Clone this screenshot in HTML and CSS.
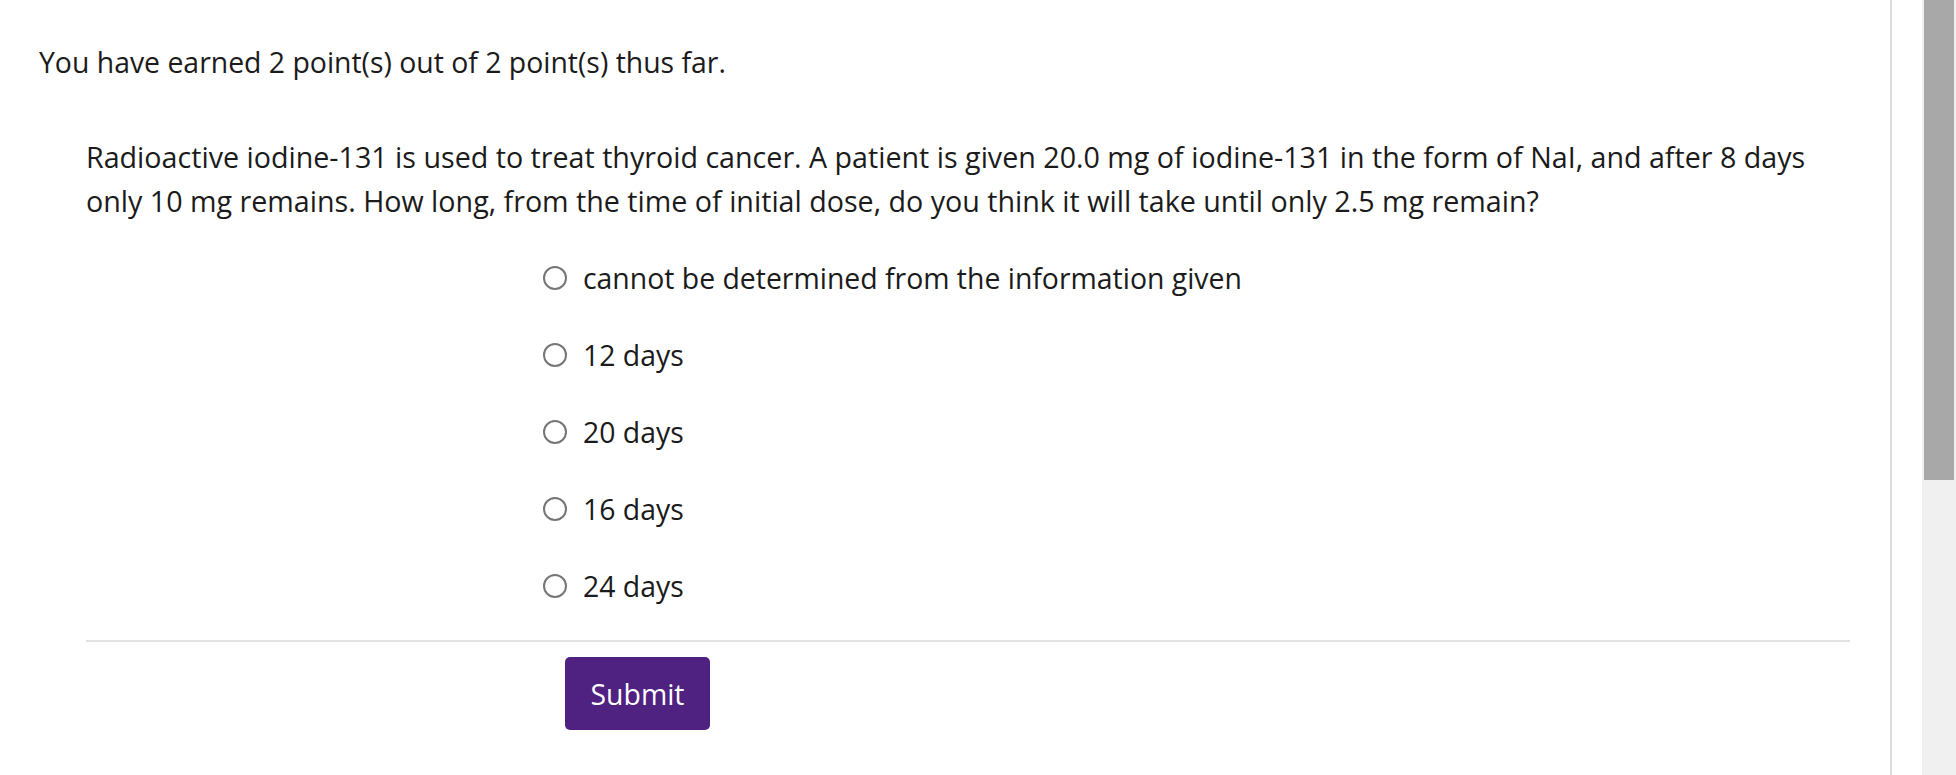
FILE: index.html
```html
<!DOCTYPE html>
<html lang="en">
<head>
<meta charset="utf-8">
<title>Question</title>
<link rel="stylesheet" href="styles.css">
</head>
<body>
<div class="window">
  <main class="page">
    <p class="points">You have earned 2 point(s) out of 2 point(s) thus far.</p>
    <section class="question">
      <p class="prompt">Radioactive iodine-131 is used to treat thyroid cancer. A patient is given 20.0 mg of iodine-131 in the form of NaI, and after 8 days only 10 mg remains. How long, from the time of initial dose, do you think it will take until only 2.5 mg remain?</p>
      <ul class="options">
        <li class="option"><span class="radio"></span><span class="label">cannot be determined from the information given</span></li>
        <li class="option"><span class="radio"></span><span class="label">12 days</span></li>
        <li class="option"><span class="radio"></span><span class="label">20 days</span></li>
        <li class="option"><span class="radio"></span><span class="label">16 days</span></li>
        <li class="option"><span class="radio"></span><span class="label">24 days</span></li>
      </ul>
      <hr class="divider">
      <div class="actions"><button class="submit" type="button">Submit</button></div>
    </section>
  </main>
  <div class="gutter"></div>
  <div class="scrollbar"><div class="thumb"></div></div>
</div>
</body>
</html>
```
FILE: styles.css
```css
html, body {
  margin: 0;
  padding: 0;
  background: #ffffff;
}
body {
  font-family: "Open Sans", "Noto Sans", sans-serif;
  color: #1b1b1b;
  font-size: 28.4px;
}
.window {
  display: flex;
  height: 775px;
  overflow: hidden;
}
.page {
  width: 1890px;
  border-right: 2px solid #dcdcdc;
  box-sizing: content-box;
}
.gutter {
  width: 30px;
  background: #ffffff;
}
.scrollbar {
  width: 34px;
  background: #f0f0f0;
  padding: 0 2px;
  box-sizing: border-box;
}
.thumb {
  height: 480px;
  background: #a8a8a8;
}
.points {
  margin: 40px 0 0 39px;
  line-height: 44px;
}
.question {
  margin: 51px 0 0 86px;
  width: 1764px;
}
.prompt {
  margin: 0;
  line-height: 44px;
  font-size: 28.65px;
  padding-right: 12px;
}
.options {
  list-style: none;
  margin: 16px 0 0 0;
  padding: 0 0 0 457px;
}
.option {
  display: flex;
  align-items: center;
  height: 77px;
  gap: 16px;
}
.radio {
  width: 24px;
  height: 24px;
  border: 2px solid #767676;
  border-radius: 50%;
  box-sizing: border-box;
  flex: none;
}
.label {
  line-height: 44px;
}
.divider {
  margin: 16px 0 0 0;
  border: 0;
  height: 2px;
  background: #e3e3e3;
}
.actions {
  padding: 15px 0 0 479px;
}
.submit {
  width: 145px;
  height: 73px;
  background: #4f2180;
  color: #ffffff;
  border: 0;
  border-radius: 5px;
  font-family: inherit;
  font-size: 28.4px;
  padding: 0;
}
```
